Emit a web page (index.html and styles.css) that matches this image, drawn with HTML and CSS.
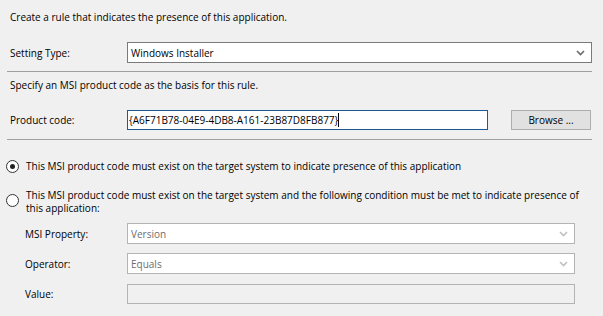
FILE: index.html
```html
<!DOCTYPE html>
<html lang="en">
<head>
    <meta charset="UTF-8">
    <title>Detection Rule</title>
    <link rel="stylesheet" href="styles.css">
</head>
<body>
    <div class="panel">
        <p class="intro">Create a rule that indicates the presence of this application.</p>

        <div class="field-row">
            <label class="field-label">Setting Type:</label>
            <div class="combo combo-wide">
                <span>Windows Installer</span>
                <svg class="arrow" width="9" height="6" viewBox="0 0 9 6"><path d="M1 1 L4.5 4.5 L8 1" fill="none" stroke="currentColor" stroke-width="1.6"/></svg>
            </div>
        </div>

        <div class="separator"></div>

        <p class="hint">Specify an MSI product code as the basis for this rule.</p>

        <div class="field-row product">
            <label class="field-label">Product code:</label>
            <div class="textbox focused">{A6F71B78-04E9-4DB8-A161-23B87D8FB877}<span class="caret"></span></div>
            <button class="browse">Browse ...</button>
        </div>

        <div class="separator"></div>

        <div class="radio-row first">
            <span class="radio checked"></span>
            <span class="radio-text">This MSI product code must exist on the target system to indicate presence of this application</span>
        </div>

        <div class="radio-row second">
            <span class="radio"></span>
            <span class="radio-text">This MSI product code must exist on the target system and the following condition must be met to indicate presence of<br>this application:</span>
        </div>

        <div class="condition">
            <div class="cond-row">
                <label class="cond-label">MSI Property:</label>
                <div class="combo disabled">
                    <span>Version</span>
                    <svg class="arrow" width="9" height="6" viewBox="0 0 9 6"><path d="M1 1 L4.5 4.5 L8 1" fill="none" stroke="currentColor" stroke-width="1.6"/></svg>
                </div>
            </div>
            <div class="cond-row">
                <label class="cond-label">Operator:</label>
                <div class="combo disabled">
                    <span>Equals</span>
                    <svg class="arrow" width="9" height="6" viewBox="0 0 9 6"><path d="M1 1 L4.5 4.5 L8 1" fill="none" stroke="currentColor" stroke-width="1.6"/></svg>
                </div>
            </div>
            <div class="cond-row">
                <label class="cond-label">Value:</label>
                <div class="valuebox"></div>
            </div>
        </div>
    </div>
</body>
</html>
```

FILE: styles.css
```css
body {
    margin: 0;
    background-color: #f0f0f0;
    font-family: "Open Sans", "Noto Sans", sans-serif;
    font-size: 10px;
    line-height: 16px;
    color: #000;
}
.panel {
    width: 603px;
    height: 316px;
    padding: 9px 0 0 7px;
    box-sizing: border-box;
}
p {
    margin: 0;
    line-height: 16px;
    padding-left: 3px;
}
.hint {
    margin-top: 5px;
}
.field-row {
    display: flex;
    align-items: center;
    height: 21px;
    margin-top: 17px;
}
.field-row.product {
    height: 20px;
}
.field-label {
    width: 117px;
    padding-left: 3px;
}
.combo {
    display: flex;
    align-items: center;
    justify-content: space-between;
    height: 21px;
    box-sizing: border-box;
    border: 1px solid #7a7a7a;
    background-color: white;
    padding: 0 6px 0 3px;
    color: #6a6a6a;
}
.combo span {
    color: #000;
}
.combo-wide {
    width: 465px;
}
.separator {
    width: 585px;
    height: 1px;
    background-color: #a0a0a0;
    margin-top: 8px;
}
.product + .separator {
    margin-top: 9px;
}
.textbox {
    width: 361px;
    height: 20px;
    box-sizing: border-box;
    border: 1px solid #1e5a8e;
    background-color: white;
    padding-left: 1px;
    display: flex;
    align-items: center;
}
.caret {
    display: inline-block;
    width: 1px;
    height: 14px;
    background-color: #000;
}
.browse {
    margin-left: 23px;
    width: 80px;
    height: 20px;
    border: 1px solid #adadad;
    background-color: #e1e1e1;
    font-family: inherit;
    font-size: 10px;
    color: #000;
    padding: 0;
}
.radio-row {
    display: flex;
    align-items: center;
    gap: 7px;
}
.radio-row.first {
    margin-top: 18px;
}
.radio-row.second {
    margin-top: 15px;
}
.radio-text {
    white-space: nowrap;
}
.second .radio-text {
    line-height: 13px;
}
.radio {
    width: 11px;
    height: 11px;
    border: 1px solid #333;
    border-radius: 50%;
    background-color: white;
    position: relative;
    flex-shrink: 0;
    margin-left: -1px;
}
.second .radio {
    margin-top: -3px;
}
.radio.checked::after {
    content: "";
    position: absolute;
    left: 3px;
    top: 3px;
    width: 5px;
    height: 5px;
    border-radius: 50%;
    background-color: #222;
}
.condition {
    padding-left: 18px;
    margin-top: 8px;
}
.cond-row {
    display: flex;
    align-items: center;
    height: 21px;
    margin-bottom: 9px;
}
.cond-label {
    width: 102px;
}
.combo.disabled {
    width: 448px;
    border-color: #b4b4b4;
    color: #c0c0c0;
}
.combo.disabled span {
    color: #6d6d6d;
}
.valuebox {
    width: 448px;
    height: 20px;
    box-sizing: border-box;
    border: 1px solid #b4b4b4;
    background-color: #f0f0f0;
}
```
